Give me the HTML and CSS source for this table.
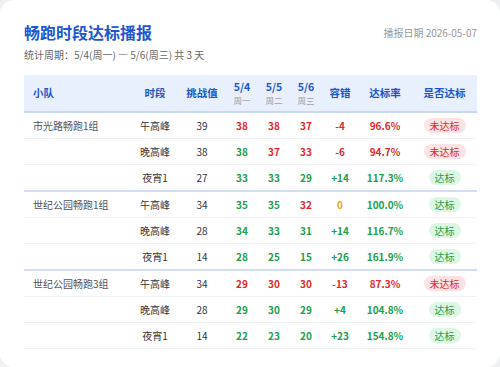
FILE: index.html
```html
<!DOCTYPE html>
<html lang="zh">
<head>
<meta charset="utf-8">
<link rel="stylesheet" href="styles.css">
</head>
<body>
<div class="card">
  <div class="head">
    <h1 class="title">畅跑时段达标播报</h1>
    <div class="date">播报日期 2026-05-07</div>
  </div>
  <div class="sub">统计周期：5/4(周一) — 5/6(周三) 共 3 天</div>
  <table class="tbl">
    <colgroup>
      <col class="c1"><col class="c2"><col class="c3"><col class="c4"><col class="c5"><col class="c6"><col class="c7"><col class="c8"><col class="c9">
    </colgroup>
    <thead>
      <tr>
        <th class="left">小队</th>
        <th>时段</th>
        <th>挑战值</th>
        <th><span class="dt">5/4</span><span class="wk">周一</span></th>
        <th><span class="dt">5/5</span><span class="wk">周二</span></th>
        <th><span class="dt">5/6</span><span class="wk">周三</span></th>
        <th>容错</th>
        <th>达标率</th>
        <th>是否达标</th>
      </tr>
    </thead>
    <tbody>
      <tr>
        <td class="team">市光路畅跑1组</td><td>午高峰</td><td>39</td>
        <td class="n r">38</td><td class="n r">38</td><td class="n r">37</td><td class="n r">-4</td><td class="n r">96.6%</td>
        <td><span class="badge no">未达标</span></td>
      </tr>
      <tr>
        <td class="team"></td><td>晚高峰</td><td>38</td>
        <td class="n g">38</td><td class="n r">37</td><td class="n r">33</td><td class="n r">-6</td><td class="n r">94.7%</td>
        <td><span class="badge no">未达标</span></td>
      </tr>
      <tr class="last">
        <td class="team"></td><td>夜宵1</td><td>27</td>
        <td class="n g">33</td><td class="n g">33</td><td class="n g">29</td><td class="n g">+14</td><td class="n g">117.3%</td>
        <td><span class="badge ok">达标</span></td>
      </tr>
      <tr>
        <td class="team">世纪公园畅跑1组</td><td>午高峰</td><td>34</td>
        <td class="n g">35</td><td class="n g">35</td><td class="n r">32</td><td class="n o">0</td><td class="n g">100.0%</td>
        <td><span class="badge ok">达标</span></td>
      </tr>
      <tr>
        <td class="team"></td><td>晚高峰</td><td>28</td>
        <td class="n g">34</td><td class="n g">33</td><td class="n g">31</td><td class="n g">+14</td><td class="n g">116.7%</td>
        <td><span class="badge ok">达标</span></td>
      </tr>
      <tr class="last">
        <td class="team"></td><td>夜宵1</td><td>14</td>
        <td class="n g">28</td><td class="n g">25</td><td class="n g">15</td><td class="n g">+26</td><td class="n g">161.9%</td>
        <td><span class="badge ok">达标</span></td>
      </tr>
      <tr>
        <td class="team">世纪公园畅跑3组</td><td>午高峰</td><td>34</td>
        <td class="n r">29</td><td class="n r">30</td><td class="n r">30</td><td class="n r">-13</td><td class="n r">87.3%</td>
        <td><span class="badge no">未达标</span></td>
      </tr>
      <tr>
        <td class="team"></td><td>晚高峰</td><td>28</td>
        <td class="n g">29</td><td class="n g">30</td><td class="n g">29</td><td class="n g">+4</td><td class="n g">104.8%</td>
        <td><span class="badge ok">达标</span></td>
      </tr>
      <tr class="end">
        <td class="team"></td><td>夜宵1</td><td>14</td>
        <td class="n g">22</td><td class="n g">23</td><td class="n g">20</td><td class="n g">+23</td><td class="n g">154.8%</td>
        <td><span class="badge ok">达标</span></td>
      </tr>
    </tbody>
  </table>
</div>
</body>
</html>
```
FILE: styles.css
```css
html, body {
  margin: 0;
  padding: 0;
}
body {
  background: #eef0f4;
  font-family: "Noto Sans", "Noto Sans CJK SC", sans-serif;
  color: #333;
}
.card {
  box-sizing: border-box;
  width: 500px;
  height: 367px;
  background: #fff;
  border-radius: 14px;
  padding: 21px 23px 0 24px;
}
.head {
  display: flex;
  justify-content: space-between;
  align-items: center;
}
.title {
  margin: 0;
  font-size: 16px;
  line-height: 22px;
  font-weight: 700;
  color: #1d57cf;
  font-family: "Noto Sans CJK SC", sans-serif;
}
.date {
  font-size: 10px;
  color: #999;
  font-family: "Noto Sans CJK SC", sans-serif;
}
.sub {
  margin-top: 4px;
  font-size: 10px;
  line-height: 16px;
  color: #666;
  font-family: "Noto Sans CJK SC", sans-serif;
}
.tbl {
  margin-top: 12px;
  width: 453px;
  border-collapse: collapse;
  table-layout: fixed;
  font-size: 10px;
}
.c1 { width: 108px; }
.c2 { width: 46px; }
.c3 { width: 48px; }
.c4, .c5, .c6 { width: 32px; }
.c7 { width: 36px; }
.c8 { width: 54px; }
.c9 { width: 65px; }
.tbl thead tr {
  background: #e8f0fd;
}
.tbl th {
  height: 36px;
  padding: 0;
  font-size: 10.5px;
  font-weight: 700;
  color: #1d55c6;
  text-align: center;
  line-height: 14px;
  border-bottom: 2px solid #c9d8f2;
  font-family: "Noto Sans CJK SC", sans-serif;
}
.tbl th.left {
  text-align: left;
  padding-left: 9px;
}
.dt {
  display: block;
  line-height: 14px;
}
.wk {
  display: block;
  margin-top: 1px;
  font-size: 8.5px;
  line-height: 11px;
  font-weight: 400;
  color: #a0a0a0;
}
.tbl td {
  height: 25px;
  padding: 0;
  text-align: center;
  border-bottom: 1px solid #f0f1f3;
  color: #333;
  font-family: "Noto Sans CJK SC", sans-serif;
}
.tbl tr.last td {
  border-bottom: 2px solid #d3def2;
}
.tbl td.team {
  text-align: left;
  padding-left: 9px;
  color: #555;
}
.tbl td.n {
  font-weight: 700;
}
.tbl td.r { color: #e3262b; }
.tbl td.g { color: #20a04b; }
.tbl td.o { color: #f5a20a; }
.badge {
  display: inline-block;
  font-size: 10px;
  line-height: 15px;
  padding: 0 6px;
  border-radius: 8px;
}
.badge.no {
  background: #fde3e3;
  color: #d92b2b;
}
.badge.ok {
  background: #dcf8e4;
  color: #1f9a47;
  padding: 0 6px;
}
```
